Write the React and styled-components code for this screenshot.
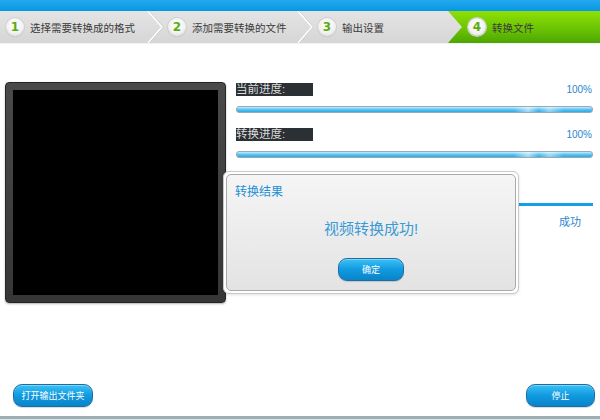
import React from 'react'
import styled, { createGlobalStyle } from 'styled-components'

const GlobalStyle = createGlobalStyle`
  html, body {
    margin: 0;
    padding: 0;
    background: #fff;
  }
  body {
    font-family: "Liberation Sans", "Noto Sans CJK SC", sans-serif;
  }
`

const steps = [
  { n: 1, label: '选择需要转换成的格式' },
  { n: 2, label: '添加需要转换的文件' },
  { n: 3, label: '输出设置' },
  { n: 4, label: '转换文件', active: true },
]

const progress = [
  { label: '当前进度:', value: '100%' },
  { label: '转换进度:', value: '100%' },
]

const Page = styled.div`
  position: relative;
  width: 600px;
  height: 420px;
  display: flex;
  flex-direction: column;
  overflow: hidden;
  font-family: "Liberation Sans", "Noto Sans CJK SC", sans-serif;
`

const TopBar = styled.div`
  height: 11px;
  background: linear-gradient(#24a9ee, #0797e4);
`

const StepBar = styled.div`
  display: flex;
  height: 32px;
  background: linear-gradient(#e4e4e4, #d6d6d6);
  border-bottom: 1px solid #f2f2f2;
`

const Step = styled.div`
  position: relative;
  width: 150px;
  flex: none;
  display: flex;
  align-items: center;
  gap: 6px;
  padding-left: ${(p) => (p.$first ? '6px' : '18px')};
  box-sizing: border-box;
  font-size: 10.5px;
  white-space: nowrap;
  color: #3a3a3a;
  background: ${(p) =>
    p.$active ? 'linear-gradient(#8fe004, #6cc404 55%, #4da602)' : 'transparent'};
  clip-path: ${(p) =>
    p.$active ? 'polygon(0 0, 100% 0, 100% 100%, 0 100%, 14px 50%)' : 'none'};
  ${(p) => p.$active && 'width: 152px; margin-left: -2px; padding-left: 20px;'}
`

const Chevron = styled.svg`
  position: absolute;
  left: -2px;
  top: 0;
`

const Num = styled.span`
  width: 18px;
  height: 18px;
  border-radius: 50%;
  flex: none;
  display: flex;
  align-items: center;
  justify-content: center;
  background: radial-gradient(circle at 50% 40%, #ffffff 0%, #f2f2f2 55%, #d4d4d4 100%);
  box-shadow: 0 0 0 1px #cfcfcf, 0 1px 1px rgba(0, 0, 0, 0.15);
  color: #5aac10;
  font-weight: bold;
  font-size: 12px;
  font-family: "DejaVu Sans", sans-serif;
`

const Main = styled.div`
  flex: 1;
  display: flex;
  align-items: flex-start;
  gap: 10px;
  padding: 38px 7px 0 5px;
`

const VideoFrame = styled.div`
  width: 205px;
  height: 205px;
  padding: 7px;
  flex: none;
  background: linear-gradient(#4a4a4a, #363636);
  border: 1px solid #262626;
  border-radius: 4px;
  box-shadow: 0 1px 2px rgba(0, 0, 0, 0.3);
`

const Screen = styled.div`
  width: 100%;
  height: 100%;
  background: #000;
`

const Side = styled.div`
  flex: 1;
  padding-top: 1px;
  display: flex;
  flex-direction: column;
`

const ProgressBlock = styled.div`
  display: flex;
  flex-direction: column;
  gap: 10px;
  margin-bottom: 15px;
`

const LabelRow = styled.div`
  display: flex;
  justify-content: space-between;
  align-items: center;
  height: 13px;
`

const Label = styled.span`
  width: 77px;
  height: 13px;
  line-height: 13px;
  background: #2b3035;
  color: #dcdcdc;
  font-size: 11.5px;
`

const Percent = styled.span`
  font-size: 10px;
  color: #2a86cc;
  padding-right: 1px;
`

const Bar = styled.div`
  height: 5px;
  border: 1px solid #9aaab4;
  border-radius: 3px;
  background:
    linear-gradient(90deg, transparent 78%, rgba(255, 255, 255, 0.55) 82%, transparent 85%, rgba(255, 255, 255, 0.45) 88%, transparent 92%),
    linear-gradient(#c4ecfc, #5cc4f2 50%, #2ea8e6);
`

const Results = styled.div`
  margin-top: 30px;
  display: flex;
  flex-direction: column;
`

const ResultsHead = styled.div`
  height: 3px;
  background: #12a0e6;
`

const ResultRow = styled.div`
  display: flex;
  justify-content: flex-end;
  padding: 7px 12px 0 0;
  font-size: 11px;
  color: #2a86cc;
`

const Dialog = styled.div`
  position: absolute;
  left: 223px;
  top: 171px;
  width: 296px;
  height: 123px;
  box-sizing: border-box;
  padding: 2px;
  background: #fff;
  border: 1px solid #c9c9c9;
  border-radius: 6px;
  box-shadow: 0 1px 3px rgba(0, 0, 0, 0.12);
`

const DialogBody = styled.div`
  height: 100%;
  box-sizing: border-box;
  border: 1px solid #a9a9a9;
  border-radius: 5px;
  background: linear-gradient(#f5f5f5, #e3e3e3);
  display: flex;
  flex-direction: column;
  align-items: center;
`

const DialogTitle = styled.div`
  align-self: flex-start;
  margin: 7px 0 0 8px;
  font-size: 12px;
  color: #1e8fd4;
`

const Message = styled.div`
  margin-top: 18px;
  font-size: 15px;
  color: #3a9ad6;
`

const Button = styled.button`
  width: ${(p) => p.$w}px;
  height: 23px;
  padding: 0;
  border: 1px solid #1a6ea6;
  border-radius: 9px;
  background: linear-gradient(#3cc0f4, #109ae0 50%, #0a84c8);
  box-shadow: inset 0 1px 0 rgba(255, 255, 255, 0.35), 0 1px 1px rgba(0, 0, 0, 0.15);
  color: #fff;
  font-size: 9px;
  font-family: "Liberation Sans", "Noto Sans CJK SC", sans-serif;
  cursor: pointer;
  margin-top: ${(p) => p.$mt || 0}px;
`

const Footer = styled.div`
  display: flex;
  justify-content: space-between;
  align-items: center;
  padding: 0 5px 9px 13px;
`

const BottomLine = styled.div`
  height: 3px;
  background: #9eaeb6;
  border-bottom: 1px solid #dfe6ea;
`

const App = () => {
  return (
    <Page>
      <GlobalStyle />
      <TopBar />
      <StepBar>
        {steps.map((s, i) => (
          <Step key={s.n} $first={i === 0} $active={s.active}>
            {i > 0 && (
              <Chevron width='18' height='32' viewBox='0 0 18 32'>
                <polyline points='1,0 15,16 1,32' fill='none' stroke='#b8b8b8' strokeWidth='1' />
                <polyline points='0,0 14,16 0,32' fill='none' stroke='#fff' strokeWidth='1.5' />
              </Chevron>
            )}
            <Num>{s.n}</Num>
            <span>{s.label}</span>
          </Step>
        ))}
      </StepBar>
      <Main>
        <VideoFrame>
          <Screen />
        </VideoFrame>
        <Side>
          {progress.map((p) => (
            <ProgressBlock key={p.label}>
              <LabelRow>
                <Label>{p.label}</Label>
                <Percent>{p.value}</Percent>
              </LabelRow>
              <Bar />
            </ProgressBlock>
          ))}
          <Results>
            <ResultsHead />
            <ResultRow>成功</ResultRow>
          </Results>
        </Side>
      </Main>
      <Footer>
        <Button $w={80}>打开输出文件夹</Button>
        <Button $w={69}>停止</Button>
      </Footer>
      <BottomLine />
      <Dialog>
        <DialogBody>
          <DialogTitle>转换结果</DialogTitle>
          <Message>视频转换成功!</Message>
          <Button $w={66} $mt={20}>
            确定
          </Button>
        </DialogBody>
      </Dialog>
    </Page>
  )
}

export default App
